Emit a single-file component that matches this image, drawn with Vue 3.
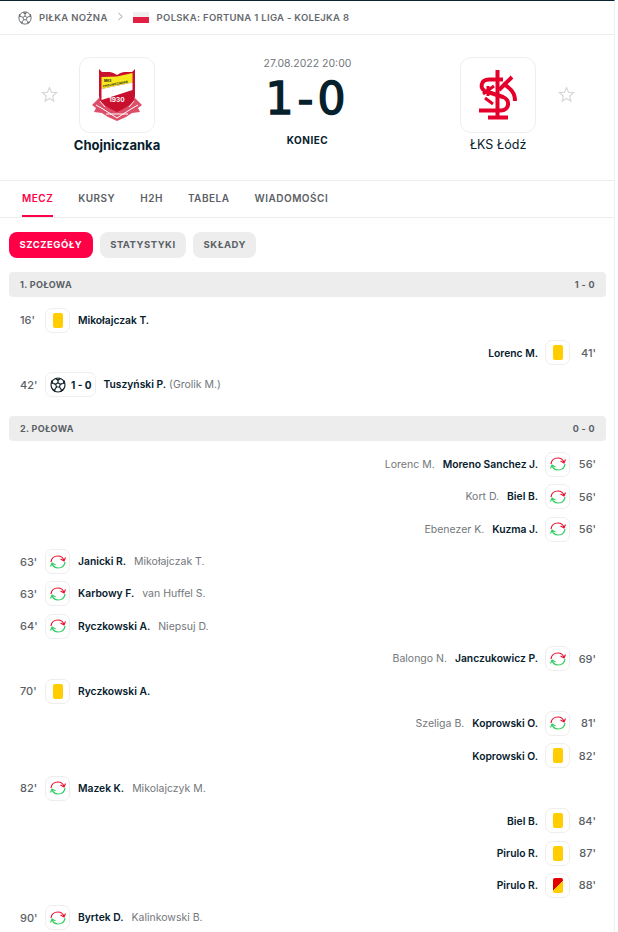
<script setup>
const tabs = ['Mecz', 'Kursy', 'H2H', 'Tabela', 'Wiadomości']
const pills = ['Szczegóły', 'Statystyki', 'Składy']

const halves = [
  {
    title: '1. Połowa',
    score: '1 - 0',
    events: [
      { min: "16'", type: 'yellow', main: 'Mikołajczak T.' },
      { min: "41'", type: 'yellow', main: 'Lorenc M.', away: true },
      { min: "42'", type: 'goal', main: 'Tuszyński P.', sub: '(Grolik M.)' },
    ],
  },
  {
    title: '2. Połowa',
    score: '0 - 0',
    events: [
      { min: "56'", type: 'sub', main: 'Moreno Sanchez J.', sub: 'Lorenc M.', away: true },
      { min: "56'", type: 'sub', main: 'Biel B.', sub: 'Kort D.', away: true },
      { min: "56'", type: 'sub', main: 'Kuzma J.', sub: 'Ebenezer K.', away: true },
      { min: "63'", type: 'sub', main: 'Janicki R.', sub: 'Mikołajczak T.' },
      { min: "63'", type: 'sub', main: 'Karbowy F.', sub: 'van Huffel S.' },
      { min: "64'", type: 'sub', main: 'Ryczkowski A.', sub: 'Niepsuj D.' },
      { min: "69'", type: 'sub', main: 'Janczukowicz P.', sub: 'Balongo N.', away: true },
      { min: "70'", type: 'yellow', main: 'Ryczkowski A.' },
      { min: "81'", type: 'sub', main: 'Koprowski O.', sub: 'Szeliga B.', away: true },
      { min: "82'", type: 'yellow', main: 'Koprowski O.', away: true },
      { min: "82'", type: 'sub', main: 'Mazek K.', sub: 'Mikolajczyk M.' },
      { min: "84'", type: 'yellow', main: 'Biel B.', away: true },
      { min: "87'", type: 'yellow', main: 'Pirulo R.', away: true },
      { min: "88'", type: 'second', main: 'Pirulo R.', away: true },
      { min: "90'", type: 'sub', main: 'Byrtek D.', sub: 'Kalinkowski B.' },
    ],
  },
]
</script>

<template>
  <div class="page">
    <div class="crumbs">
      <svg class="ball-small" viewBox="0 0 24 24" fill="none" stroke="#666a6e" stroke-width="1.6">
        <circle cx="12" cy="12" r="10.5" />
        <path d="M12 8.500l3.500 2.500-1.300 4h-4.400L8.500 11z" />
        <path d="M12 8.500V5M15.500 11l3.500-1.500M14.200 15l2.300 3.200M9.800 15l-2.300 3.200M8.500 11L5 9.500" />
        <path d="M8.500 2.500L12 5l3.500-2.500M19 9.500l3-.5-1-4M16.500 18.200l.5 3 3-2.500M7.500 18.200l-.5 3-3-2.500M5 9.500L2 9l1-4" fill="#666a6e" />
      </svg>
      <span>Piłka nożna</span>
      <svg class="chev" viewBox="0 0 8 10" fill="none" stroke="#9a9da0" stroke-width="1.1">
        <path d="M1.500 1l4.500 4-4.500 4" />
      </svg>
      <span class="flag"></span>
      <span class="league">Polska: Fortuna 1 Liga - Kolejka 8</span>
    </div>

    <div class="match">
      <svg class="star left" viewBox="0 0 24 24" fill="none" stroke="#d4d5d6" stroke-width="1.6">
        <path d="M12 2.200l2.900 6.600 7.100.7-5.400 4.700 1.600 7-6.200-3.700-6.200 3.700 1.600-7L2 9.500l7.100-.7z" />
      </svg>
      <div class="team">
        <div class="logo">
          <svg width="52" height="54" viewBox="0 0 52 54">
            <path d="M1 37l7-7 4 5 14 8 14-8 4-5 7 7-4 3 2 4-8 1-6 4-9 4-9-4-6-4-8-1 2-4z" fill="#dd4f68" />
            <path d="M5 37l7 4 14 9 14-9 7-4M15 46h22M9 33l5 6M43 33l-5 6" stroke="#fff" stroke-width="1" fill="none" />
            <path d="M8 1l3 3c5 0 10-1 15 3 5-4 10-3 15-3l3-3v27c0 7-9 12-18 16C17 40 8 35 8 28z" fill="#c8102e" />
            <path d="M10.500 9l15.500-.5 15.500-3.500v9.500L10.500 21z" fill="#f7e81e" />
            <path d="M10.500 21l31-6.500v7.500l-31 10z" fill="#fff" />
            <text x="13" y="14" font-size="3.200" font-weight="700" fill="#222" font-family="Inter, sans-serif">MKS</text>
            <text x="12" y="19.500" font-size="3.100" font-weight="700" fill="#222" font-family="Inter, sans-serif" transform="rotate(-11 12 19.500)">CHOJNICZANKA</text>
            <text x="18" y="34" font-size="6.500" font-weight="700" fill="#fff" font-family="Inter, sans-serif">1930</text>
          </svg>
        </div>
        <div class="team-name home">Chojniczanka</div>
      </div>
      <div class="center">
        <div class="date">27.08.2022 20:00</div>
        <div class="score">1-0</div>
        <div class="status">Koniec</div>
      </div>
      <div class="team">
        <div class="logo">
          <svg width="38" height="50" viewBox="0 0 38 50" fill="none" stroke="#e4002b" stroke-width="4">
            <path d="M18.500 0v49" />
            <path d="M9 47.500h20" />
            <path d="M0 40.500h22c8 0 10-10.500 2-13.500L6 21" />
            <path d="M6 21C1 19 1 9.500 10 9.500h14" />
            <path d="M33 7L20 20M24 13l6 5c4 3 6 8 6 13" />
            <path d="M9 16v10M4 24l11-8M6 28l8 6" stroke-width="3" />
          </svg>
        </div>
        <div class="team-name">ŁKS Łódź</div>
      </div>
      <svg class="star right" viewBox="0 0 24 24" fill="none" stroke="#d4d5d6" stroke-width="1.6">
        <path d="M12 2.200l2.900 6.600 7.100.7-5.400 4.700 1.600 7-6.200-3.700-6.200 3.700 1.600-7L2 9.500l7.100-.7z" />
      </svg>
    </div>

    <div class="tabs">
      <div v-for="(t, i) in tabs" :key="t" class="tab" :class="{ active: i === 0 }">{{ t }}</div>
    </div>

    <div class="pills">
      <div v-for="(p, i) in pills" :key="p" class="pill" :class="{ on: i === 0 }">{{ p }}</div>
    </div>

    <section v-for="h in halves" :key="h.title" class="half">
      <div class="half-head">
        <span>{{ h.title }}</span>
        <span>{{ h.score }}</span>
      </div>
      <div v-for="(e, i) in h.events" :key="i" class="row" :class="{ away: e.away }">
        <span class="min">{{ e.min }}</span>
        <span class="box" :class="{ wide: e.type === 'goal' }">
          <i v-if="e.type === 'yellow'" class="card"></i>
          <i v-else-if="e.type === 'second'" class="card second"></i>
          <svg v-else-if="e.type === 'sub'" width="16" height="14" viewBox="0 0 16 14" fill="none" stroke-width="1.200">
            <path d="M1 7C1.500 3 4.500 1 8 1c3 0 5 1.500 6 4.500" stroke="#e8112d" />
            <path d="M10.500 4l3.500 2 1.500-3.500" stroke="#e8112d" />
            <path d="M15 7c-.5 4-3.500 6-7 6-3 0-5-1.500-6-4.500" stroke="#2ecc5f" />
            <path d="M5.500 10L2 8 .5 11.500" stroke="#2ecc5f" />
          </svg>
          <template v-else>
            <svg width="16" height="16" viewBox="0 0 24 24" fill="none" stroke="#16242c" stroke-width="1.800">
              <circle cx="12" cy="12" r="10.500" />
              <path d="M12 8.500l3.500 2.500-1.300 4h-4.400L8.500 11z" />
              <path d="M12 8.500V5M15.500 11l3.500-1.500M14.200 15l2.300 3.200M9.800 15l-2.300 3.200M8.500 11L5 9.500" />
              <path d="M8.500 2.500L12 5l3.500-2.500M19 9.500l3-.5-1-4M16.500 18.200l.5 3 3-2.500M7.500 18.200l-.5 3-3-2.500M5 9.500L2 9l1-4" fill="#16242c" />
            </svg>
            <b class="goal-score">1 - 0</b>
          </template>
        </span>
        <span class="names" :class="{ tight: e.type === 'goal' }">
          <span class="main">{{ e.main }}</span>
          <span v-if="e.sub" class="sub">{{ e.sub }}</span>
        </span>
      </div>
    </section>
  </div>
</template>

<style scoped>
.page {
  width: 615px;
  height: 932px;
  box-sizing: border-box;
  border-top: 1px solid #0b2530;
  border-right: 1px solid #f0f0f0;
  overflow: hidden;
  background: #fff;
  color: #06202c;
  font-family: Inter, "Noto Sans", sans-serif;
}

.crumbs {
  height: 33px;
  display: flex;
  align-items: center;
  padding-left: 19px;
  border-bottom: 1px solid #ececec;
  color: #666a6e;
  font-size: 9.5px;
  font-weight: 600;
  letter-spacing: 0.3px;
  text-transform: uppercase;
}
.ball-small {
  width: 14px;
  height: 14px;
  margin: 0 7px 0 -1px;
}
.chev {
  width: 7px;
  height: 9px;
  margin: 0 9px 2px 9px;
}
.flag {
  width: 16px;
  height: 11px;
  margin-right: 8px;
  background: linear-gradient(#efefef 50%, #e21f42 50%);
}

.match {
  height: 146px;
  box-sizing: border-box;
  padding: 22px 32px 0 33px;
  display: grid;
  grid-template-columns: 30px 108px 1fr 108px 30px;
  border-bottom: 1px solid #ececec;
}
.star {
  width: 17px;
  height: 17px;
  margin-top: 29px;
}
.star.left {
  margin-left: 8px;
}
.star.right {
  margin-left: 6px;
}
.team {
  display: flex;
  flex-direction: column;
  align-items: center;
}
.logo {
  width: 76px;
  height: 76px;
  box-sizing: border-box;
  border: 1px solid #eeeeee;
  border-radius: 11px;
  display: flex;
  align-items: center;
  justify-content: center;
}
.team-name {
  margin-top: 4px;
  font-size: 12.500px;
  line-height: 16px;
}
.team-name.home {
  font-size: 13px;
  font-weight: 700;
}
.center {
  text-align: center;
}
.date {
  color: #73777b;
  font-size: 10.500px;
  line-height: 14px;
}
.score {
  margin-top: 6px;
  font-family: "DejaVu Sans", sans-serif;
  font-size: 44px;
  font-weight: 400;
  line-height: 44px;
  letter-spacing: 4px;
  -webkit-text-stroke: 1.5px #06202c;
}
.status {
  margin-top: 12px;
  font-size: 10px;
  font-weight: 700;
  line-height: 14px;
  letter-spacing: 0.5px;
  text-transform: uppercase;
}

.tabs {
  height: 36px;
  display: flex;
  gap: 25px;
  padding-left: 22px;
  border-bottom: 1px solid #ececec;
  font-size: 10px;
  font-weight: 600;
  letter-spacing: 0.5px;
  text-transform: uppercase;
  color: #5b6065;
}
.tab {
  line-height: 35px;
}
.tab.active {
  color: #ff0046;
  height: 36px;
  box-sizing: border-box;
  border-bottom: 2px solid #ff0046;
}

.pills {
  display: flex;
  gap: 7px;
  padding: 14px 0 14px 9px;
}
.pill {
  height: 26px;
  padding: 0 10.500px;
  border-radius: 8px;
  background: #ededed;
  color: #5b6065;
  font-size: 9.500px;
  font-weight: 700;
  line-height: 26px;
  letter-spacing: 0.5px;
  text-transform: uppercase;
}
.pill.on {
  background: #ff0046;
  color: #fff;
}

.half {
  margin: 0 9px 15px;
  width: 597px;
}
.half-head {
  height: 25px;
  box-sizing: border-box;
  display: flex;
  align-items: center;
  justify-content: space-between;
  padding: 0 11px;
  margin-bottom: 7px;
  border-radius: 4px;
  background: #ededed;
  color: #5b6065;
  font-size: 9px;
  font-weight: 700;
  letter-spacing: 0.35px;
  text-transform: uppercase;
}

.row {
  height: 32.400px;
  display: flex;
  align-items: center;
  padding: 0 10px 0 11px;
  font-size: 10.500px;
}
.row.away {
  flex-direction: row-reverse;
}
.min {
  width: 25px;
  color: #5b6065;
  font-weight: 500;
  font-size: 11px;
}
.away .min {
  width: 26px;
  text-align: right;
}
.box {
  min-width: 25px;
  height: 25px;
  box-sizing: border-box;
  border: 1px solid #eeeeee;
  border-radius: 7px;
  display: inline-flex;
  align-items: center;
  justify-content: center;
}
.box.wide {
  padding: 0 4px;
  gap: 5px;
}
.goal-score {
  font-size: 10px;
  font-weight: 700;
}
.card {
  width: 10px;
  height: 15px;
  border-radius: 2px;
  background: #ffcd00;
}
.card.second {
  background: linear-gradient(135deg, #e00000 50%, #ffcd00 50%);
}
.names {
  display: flex;
  align-items: baseline;
  gap: 8px;
  margin-left: 8px;
}
.names.tight {
  gap: 3px;
  margin-left: 7px;
}
.away .names {
  flex-direction: row-reverse;
  margin: 0 7px 0 0;
}
.main {
  font-size: 10.300px;
  font-weight: 600;
}
.sub {
  color: #73777b;
  font-weight: 400;
}
</style>

<style>
html,
body {
  overflow: hidden;
}
</style>
